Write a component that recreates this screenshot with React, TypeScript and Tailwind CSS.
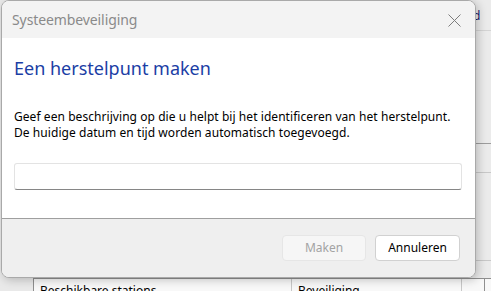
import React from "react";

export default function App() {
  const font = { fontFamily: '"Noto Sans", "Segoe UI", sans-serif' } as React.CSSProperties;
  return (
    <div className="relative w-[491px] h-[291px] overflow-hidden bg-[#e9e9e9]" style={font}>
      {/* background window */}
      <div className="flex flex-col w-full h-full">
        <div className="flex h-[278px] shrink-0">
          <div className="flex-1" />
          <div className="w-[15px] flex flex-col bg-[#ebebeb]">
            <div className="h-[31px] border-b border-[#d4d4d4] text-[12px] leading-[31px] text-[#1a1a6a] -ml-[3px]">d</div>
            <div className="h-[113px] border-b border-[#9d9d9d]" />
            <div className="h-[29px] border-b border-[#c8c8c8]" />
            <div className="h-[88px] border-b border-[#c8c8c8]" />
            <div className="flex-1" />
          </div>
        </div>
        <div className="flex flex-1 min-h-0 overflow-hidden pl-[33px] bg-[#e9e9e9]">
          <div className="flex flex-1 border-t border-l border-[#8f8f8f] bg-[#f8f8f8] text-[12px] text-black">
            <div className="w-[258px] border-r border-[#c8c8c8] pl-[6px] pt-[5px] leading-[14px]">Beschikbare stations</div>
            <div className="w-[170px] border-r border-[#c8c8c8] pl-[6px] pt-[5px] leading-[14px]">Beveiliging</div>
            <div className="w-[23px] border-r border-[#8f8f8f]" />
            <div className="flex-1" />
          </div>
        </div>
      </div>

      {/* dialog */}
      <div className="absolute left-[1px] top-0 w-[475px] h-[278px] flex flex-col rounded-[8px] border border-[#a9a9a9] overflow-hidden shadow-[2px_2px_10px_rgba(0,0,0,0.22)] bg-white">
        <div className="h-[37px] shrink-0 bg-[#f3f3f3] flex items-center justify-between pl-[10px] pr-[14px]">
          <span className="text-[14px] text-[#8a8a8a] tracking-[-0.1px]">Systeembeveiliging</span>
          <svg width="13" height="13" viewBox="0 0 13 13" className="mt-[1px]">
            <path d="M0.5 0.5 L12.5 12.5 M12.5 0.5 L0.5 12.5" stroke="#7d7d7d" strokeWidth="1" fill="none" />
          </svg>
        </div>
        <div className="h-[180px] shrink-0 bg-white flex flex-col pl-[12px] pr-[12px]">
          <div className="pt-[17px] text-[18px] leading-[27px] text-[#1b3ea5]">Een herstelpunt maken</div>
          <div className="pt-[27px] text-[12px] leading-[16px] text-black tracking-[0.06px]">
            <div>Geef een beschrijving op die u helpt bij het identificeren van het herstelpunt.</div>
            <div>De huidige datum en tijd worden automatisch toegevoegd.</div>
          </div>
          <div className="mt-[22px] h-[27px] w-[448px] rounded-[3px] border border-[#e3e3e3] border-b-[#868686] bg-white" />
        </div>
        <div className="flex-1 bg-[#efefef] border-t border-[#9f9f9f] flex justify-end items-start pt-[16px] pr-[15px] gap-[9px]">
          <div className="w-[84px] h-[26px] rounded-[4px] border border-[#e6e6e6] bg-[#f6f6f6] flex items-center justify-center text-[12px] text-[#a3a3a3]">Maken</div>
          <div className="w-[85px] h-[26px] rounded-[4px] border border-[#d1d1d1] bg-white flex items-center justify-center text-[12px] text-black">Annuleren</div>
        </div>
      </div>
    </div>
  );
}
